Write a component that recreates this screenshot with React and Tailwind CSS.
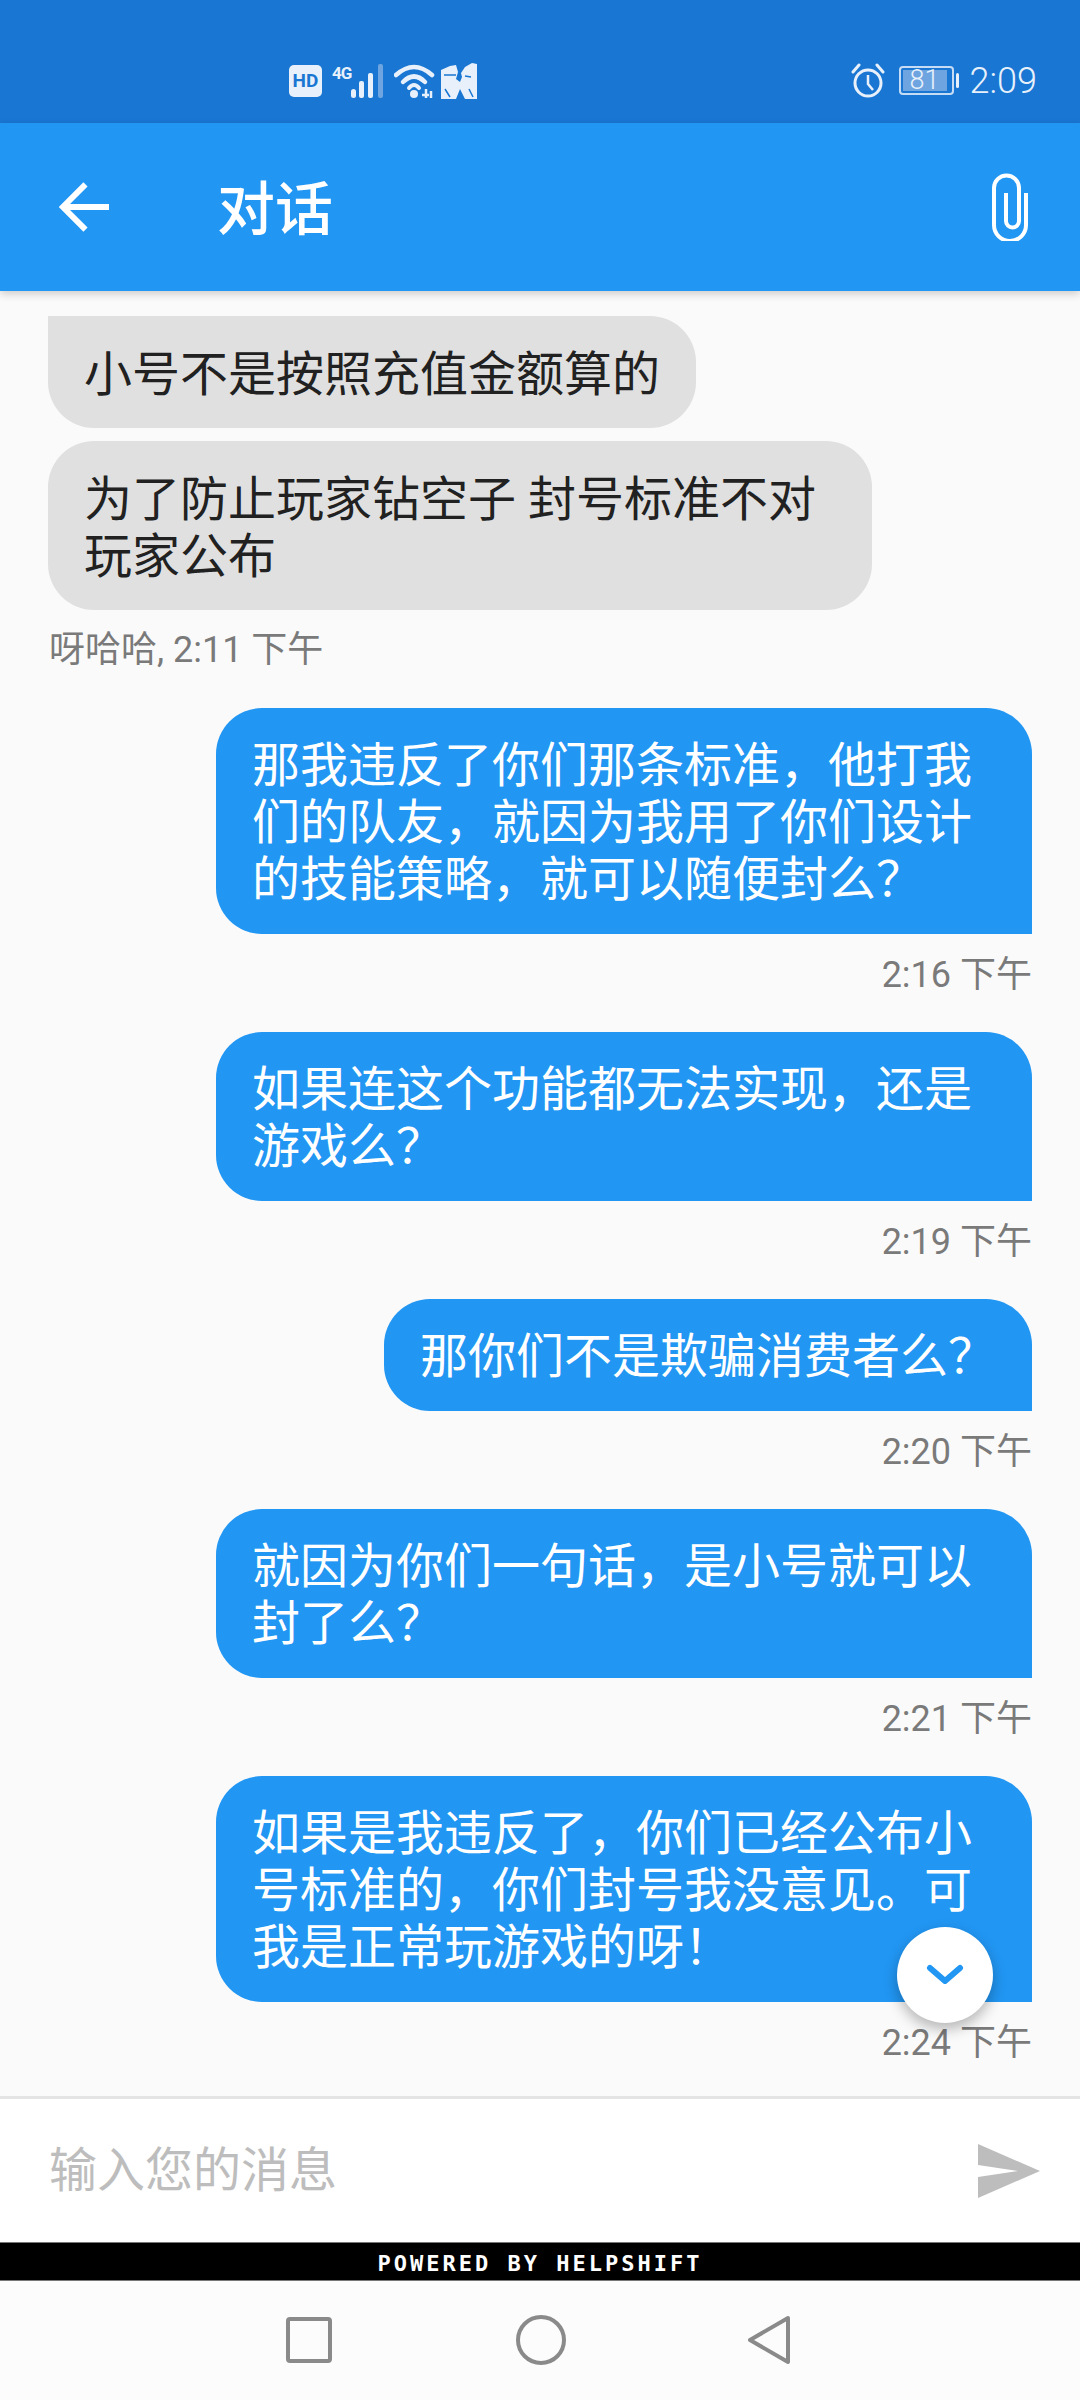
import React from 'react';

const CJK = 'font-["Roboto","Noto_Sans_CJK_SC",sans-serif]';

function StatusLeft() {
  return (
    <div className="flex items-center pl-[289px]">
      <div className="flex h-[32px] w-[33px] items-center justify-center rounded-[5px] bg-[#e8f1fb] text-[19px] font-bold leading-none text-[#1976D2] font-['Roboto',sans-serif]">HD</div>
      <div className="ml-[10px] h-[36px] w-[19px] text-[17px] font-bold leading-[20px] tracking-[-1px] text-[#e8f1fb] font-['Roboto',sans-serif]">4G</div>
      <svg width="34" height="36" viewBox="19 0 34 36">
        <rect x="19" y="26" width="5" height="9" rx="2.500" fill="#e8f1fb" />
        <rect x="27" y="18" width="5" height="17" rx="2" fill="#e8f1fb" />
        <rect x="36" y="10" width="5" height="25" rx="2" fill="#e8f1fb" />
        <rect x="46" y="1" width="5" height="34" rx="2" fill="#6ea4e0" />
      </svg>
      <svg className="ml-[9px]" width="42" height="36" viewBox="0 0 42 36" fill="none">
        <path d="M2 12 Q20 -4 38 12" stroke="#e8f1fb" strokeWidth="4.500" strokeLinecap="round" />
        <path d="M9 19 Q20 8 31 19" stroke="#e8f1fb" strokeWidth="4.500" strokeLinecap="round" />
        <path d="M15 25 Q20 19 25 25" stroke="#e8f1fb" strokeWidth="4" strokeLinecap="round" />
        <circle cx="20" cy="31" r="4" fill="#e8f1fb" />
        <path d="M32 26v9M28 32h7M37 28v7" stroke="#e8f1fb" strokeWidth="2.500" />
      </svg>
      <svg className="ml-[5px]" width="36" height="36" viewBox="0 0 36 36">
        <path d="M0 7 L9 3 L15 2 L17 9 L15 16 L19 19 L21 14 L20 10 L24 4 L31 0 L36 1 L36 36 L24 36 L19 26 L15 36 L0 36Z" fill="#e8f1fb" />
        <path d="M3 12 H15 M24 13 L30 14 M4 26 L9 34 M28 26 L32 34" stroke="#1976D2" strokeWidth="1.500" />
      </svg>
    </div>
  );
}

function StatusRight() {
  return (
    <div className="flex items-center pr-[43px]">
      <svg width="34" height="36" viewBox="0 0 34 36" fill="none" stroke="#e8f1fb" strokeWidth="3">
        <circle cx="17" cy="20" r="13" />
        <path d="M17 12v9l5 6" strokeWidth="2.500" />
        <path d="M2 9 L8 2 M32 9 L26 2" strokeLinecap="round" />
      </svg>
      <div className="ml-[14px] flex h-[29px] w-[55px] items-center rounded-[4px] border-2 border-[#c5dcf4] p-[2px]">
        <div className="flex h-full w-[44px] items-center justify-center bg-[#6ea4e0] text-[27px] font-light leading-none text-[#e8f1fb] font-['Roboto',sans-serif]">81</div>
      </div>
      <div className="ml-[2px] h-[15px] w-[3px] rounded-full bg-[#e8f1fb]" />
      <div className="ml-[11px] text-[36px] font-light leading-none text-[#e8f1fb] font-['Roboto',sans-serif]">2:09</div>
    </div>
  );
}

function Theirs({ children, corner }) {
  return (
    <div className={`w-fit max-w-[824px] bg-[#e0e0e0] px-[36px] pb-[25px] pt-[30px] text-[48px] leading-[57px] text-[#212121] ${corner}`}>
      {children}
    </div>
  );
}

function Mine({ text, time }) {
  return (
    <div className="mt-[35px] flex flex-col items-end first:mt-0">
      <div className="w-fit max-w-[816px] rounded-t-[46px] rounded-bl-[46px] bg-[#2196F3] px-[36px] pb-[26px] pt-[29px] text-[48px] leading-[57px] text-white">
        {text}
      </div>
      <div className="mt-[19px] h-[44px] text-[36px] leading-[44px] text-[#7a7a7a]">{time}</div>
    </div>
  );
}

export default function App() {
  return (
    <div lang="zh-CN" className={`flex h-[2400px] w-[1080px] flex-col overflow-hidden bg-[#fafafa] ${CJK}`}>
      <div className="flex h-[123px] items-center justify-between bg-[#1976D2] pt-[38px]">
        <StatusLeft />
        <StatusRight />
      </div>

      <div className="z-10 flex h-[168px] items-center bg-[#2196F3] shadow-[0_3px_8px_rgba(0,0,0,0.18)]">
        <svg className="ml-[59px]" width="51" height="50" viewBox="0 0 52 50" fill="none" stroke="white" strokeWidth="6">
          <path d="M51 25H5M27 2 4 25l23 23" />
        </svg>
        <div className="ml-[107px] mt-[6px] text-[58px] font-medium leading-none text-white">对话</div>
        <svg className="ml-auto mr-[51px]" width="38" height="68" viewBox="0 0 38 68" fill="none" stroke="white" strokeWidth="4">
          <path d="M35 20v32a16 16 0 0 1-32 0V15a12.500 12.500 0 0 1 25 0v33a6.500 6.500 0 0 1-13 0V20" />
        </svg>
      </div>

      <div className="relative flex-1 overflow-hidden px-[48px] pt-[25px]">
        <Theirs corner="rounded-[46px] rounded-tl-none">小号不是按照充值金额算的</Theirs>
        <div className="mt-[13px]">
          <Theirs corner="rounded-[46px]">为了防止玩家钻空子 封号标准不对玩家公布</Theirs>
        </div>
        <div className="mb-[36px] mt-[18px] h-[44px] pl-[1px] text-[36px] leading-[44px] text-[#7a7a7a]">呀哈哈, 2:11 下午</div>

        <Mine text="那我违反了你们那条标准，他打我们的队友，就因为我用了你们设计的技能策略，就可以随便封么？" time="2:16 下午" />
        <Mine text="如果连这个功能都无法实现，还是游戏么？" time="2:19 下午" />
        <Mine text="那你们不是欺骗消费者么？" time="2:20 下午" />
        <Mine text="就因为你们一句话，是小号就可以封了么？" time="2:21 下午" />
        <Mine text="如果是我违反了，你们已经公布小号标准的，你们封号我没意见。可我是正常玩游戏的呀！" time="2:24 下午" />

        <div className="absolute left-[897px] top-[1636px] flex h-[96px] w-[96px] items-center justify-center rounded-full bg-white shadow-[0_6px_14px_rgba(0,0,0,0.28)]">
          <svg width="38" height="24" viewBox="0 0 38 24" fill="none" stroke="#2196F3" strokeWidth="6" strokeLinecap="round" strokeLinejoin="round">
            <path d="M4 5 19 18 34 5" />
          </svg>
        </div>
      </div>

      <div className="flex h-[146px] items-center border-t-[3px] border-[#e4e4e4] bg-white pl-[49px] pr-[40px]">
        <div className="text-[48px] leading-none text-[#bdbdbd]">输入您的消息</div>
        <svg className="ml-auto" width="62" height="54" viewBox="0 0 62 54">
          <path d="M0 0 62 27 0 54V33L40 27 0 21Z" fill="#bdbdbd" />
        </svg>
      </div>

      <div className="flex h-[39px] items-center justify-center border-y border-[#777] bg-black pt-[5px] text-[22px] font-bold leading-none tracking-[3px] text-white font-['DejaVu_Sans_Mono',monospace]">
        POWERED BY HELPSHIFT
      </div>

      <div className="flex h-[119px] items-center justify-center bg-[#fcfcfc] pb-[1px] pr-[4px]">
        <svg width="46" height="46" viewBox="0 0 46 46" fill="none" stroke="#8a8a8a" strokeWidth="4" className="mr-[184px]">
          <rect x="2" y="2" width="42" height="42" rx="2" />
        </svg>
        <svg width="50" height="50" viewBox="0 0 50 50" fill="none" stroke="#8a8a8a" strokeWidth="4" className="mr-[181px]">
          <circle cx="25" cy="25" r="23" />
        </svg>
        <svg width="44" height="50" viewBox="0 0 44 50" fill="none" stroke="#8a8a8a" strokeWidth="4" strokeLinejoin="round">
          <path d="M41 3 3 25l38 22Z" />
        </svg>
      </div>
    </div>
  );
}
